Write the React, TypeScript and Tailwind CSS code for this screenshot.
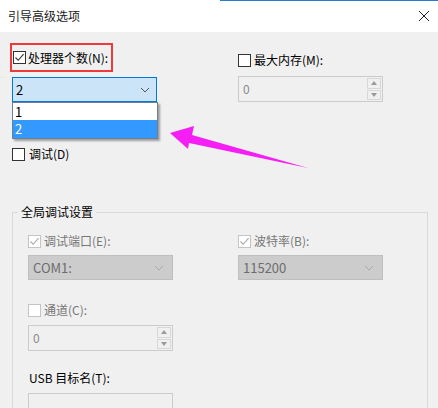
import React from "react";

function Check({ color }: { color: string }) {
  return (
    <svg width="11" height="11" viewBox="0 0 11 11" className="block">
      <polyline points="1.5,5.5 4.2,8.3 9.6,2.2" fill="none" stroke={color} strokeWidth="1.1" />
    </svg>
  );
}

function Box({ checked, disabled }: { checked?: boolean; disabled?: boolean }) {
  return (
    <div
      className={
        "w-[13px] h-[13px] shrink-0 border flex items-center justify-center " +
        (disabled ? "border-[#c4c4c4] bg-white" : "border-[#333333] bg-white")
      }
    >
      {checked ? <Check color={disabled ? "#a8a8a8" : "#333333"} /> : null}
    </div>
  );
}

function Chevron({ color }: { color: string }) {
  return (
    <svg width="10" height="6" viewBox="0 0 10 6" className="block">
      <polyline points="1,1 5,5 9,1" fill="none" stroke={color} strokeWidth="1" />
    </svg>
  );
}

function Spin({ w }: { w: string }) {
  return (
    <div className={"h-[26px] border border-[#cccccc] bg-[#f0f0f0] flex items-stretch " + w}>
      <div className="flex-1 flex items-center pl-[4px] text-[#8a8a8a]">0</div>
      <div className="w-[16px] flex flex-col p-[1px] gap-[1px]">
        <div className="flex-1 border border-[#d8d8d8] flex items-center justify-center">
          <svg width="6" height="4" viewBox="0 0 6 4">
            <polygon points="0,4 6,4 3,0" fill="#9a9a9a" />
          </svg>
        </div>
        <div className="flex-1 border border-[#d8d8d8] flex items-center justify-center">
          <svg width="6" height="4" viewBox="0 0 6 4">
            <polygon points="0,0 6,0 3,4" fill="#9a9a9a" />
          </svg>
        </div>
      </div>
    </div>
  );
}

function DisabledCombo({ text }: { text: string }) {
  return (
    <div className="w-[145px] h-[25px] border border-[#bfbfbf] bg-[#cccccc] flex items-center justify-between pl-[4px] pr-[8px] text-[#6d6d6d] text-[13px]">
      <span>{text}</span>
      <Chevron color="#a8a8a8" />
    </div>
  );
}

export default function App() {
  return (
    <div className="w-[438px] h-[408px] overflow-hidden bg-[#f0f0f0] relative font-['Noto_Sans_CJK_SC','Noto_Sans',sans-serif] text-[12px] leading-[16px] text-black">
      {/* title bar */}
      <div className="h-[32px] bg-white relative flex items-center justify-between pl-[8px] pr-[9px]">
        <div className="absolute top-0 left-[220px] right-0 h-[1px] bg-[#2b79d0]" />
        <span className="text-[12px] text-[#1a1a1a]">引导高级选项</span>
        <svg width="10" height="10" viewBox="0 0 10 10" className="block">
          <line x1="0" y1="0" x2="10" y2="10" stroke="#222" strokeWidth="1" />
          <line x1="10" y1="0" x2="0" y2="10" stroke="#222" strokeWidth="1" />
        </svg>
      </div>

      {/* top section */}
      <div className="flex">
        <div className="w-[238px] pl-[10px] pt-[11px] flex flex-col items-start">
          <div className="h-[29px] w-[103px] border-2 border-[#ee3a3a] flex items-center pl-[1px] gap-[2px]">
            <Box checked />
            <span className="whitespace-nowrap">处理器个数(N):</span>
          </div>
          <div className="relative ml-[2px] mt-[5px]">
            <div className="w-[145px] h-[25px] border border-[#0078d7] bg-[#cce4f7] flex items-center justify-between pl-[3px] pr-[6px] text-[13px]">
              <span>2</span>
              <Chevron color="#555" />
            </div>
            <div className="absolute left-0 top-full w-[146px] border border-[#6b7f95] bg-white shadow-[2px_2px_2px_rgba(0,0,0,0.35)] text-[13px]">
              <div className="h-[17px] flex items-center pl-[2px]">1</div>
              <div className="h-[18px] flex items-center pl-[2px] bg-[#3399ff] text-white">2</div>
            </div>
          </div>
          <div className="mt-[44px] ml-[2px] h-[16px] flex items-center gap-[4px]">
            <Box />
            <span>调试(D)</span>
          </div>
        </div>
        <div className="pt-[20px] flex flex-col items-start">
          <div className="h-[16px] flex items-center gap-[3px]">
            <Box />
            <span>最大内存(M):</span>
          </div>
          <div className="mt-[8px]">
            <Spin w="w-[145px]" />
          </div>
        </div>
      </div>

      {/* group box */}
      <fieldset className="ml-[12px] mt-[42px] w-[416px] h-[260px] border border-[#d9d9d9] p-0 m-0">
        <legend className="ml-[5px] px-[3px] leading-[16px] text-black">全局调试设置</legend>
        <div className="pl-[15px] pt-[13px] flex flex-col items-start">
          <div className="flex">
            <div className="w-[210px] flex flex-col items-start">
              <div className="h-[16px] flex items-center gap-[3px] text-[#777777]">
                <Box checked disabled />
                <span>调试端口(E):</span>
              </div>
              <div className="mt-[6px]">
                <DisabledCombo text="COM1:" />
              </div>
            </div>
            <div className="flex flex-col items-start">
              <div className="h-[16px] flex items-center gap-[3px] text-[#777777]">
                <Box checked disabled />
                <span>波特率(B):</span>
              </div>
              <div className="mt-[6px]">
                <DisabledCombo text="115200" />
              </div>
            </div>
          </div>
          <div className="mt-[22px] h-[16px] flex items-center gap-[3px] text-[#777777]">
            <Box disabled />
            <span>通道(C):</span>
          </div>
          <div className="mt-[7px]">
            <Spin w="w-[145px]" />
          </div>
          <div className="mt-[19px] ml-[1px] h-[16px] flex items-center">
            <span>USB 目标名(T):</span>
          </div>
          <div className="mt-[7px] w-[145px] h-[25px] border border-[#cccccc] bg-[#f0f0f0]" />
        </div>
      </fieldset>

      {/* annotation arrow */}
      <svg className="absolute left-0 top-0 pointer-events-none" width="438" height="408" viewBox="0 0 438 408">
        <polygon
          points="170,133 194,126 192,135 308,168 189,143 188,149"
          fill="#f51ef4"
        />
      </svg>
    </div>
  );
}
